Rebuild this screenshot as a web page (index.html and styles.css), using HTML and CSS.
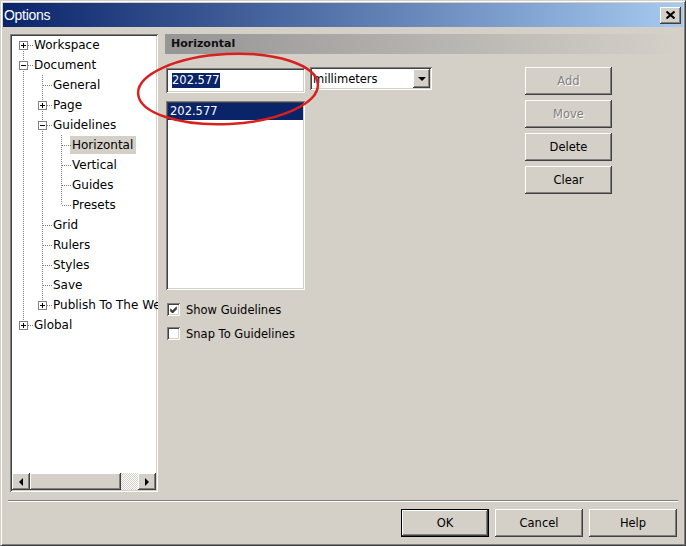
FILE: index.html
```html
<!DOCTYPE html>
<html lang="en">
<head>
    <meta charset="UTF-8">
    <title>Options</title>
    <link rel="stylesheet" href="styles.css">
</head>
<body>
    <div class="window">
        <div class="titlebar">
            <span class="title">Options</span>
            <span class="close-btn">
                <svg width="9" height="8" viewBox="0 0 9 8"><path d="M0.5 0.5L8.5 7.5M8.5 0.5L0.5 7.5" stroke="#000" stroke-width="2"/></svg>
            </span>
        </div>

        <div class="body">
            <!-- Tree -->
            <div class="tree">
                <div class="rows">
                    <div class="row"><span class="g f"><i class="box plus"></i></span><span class="label">Workspace</span></div>
                    <div class="row"><span class="g t"><i class="box minus"></i></span><span class="label">Document</span></div>
                    <div class="row"><span class="g v"></span><span class="g t"></span><span class="label">General</span></div>
                    <div class="row"><span class="g v"></span><span class="g t"><i class="box plus"></i></span><span class="label">Page</span></div>
                    <div class="row"><span class="g v"></span><span class="g t"><i class="box minus"></i></span><span class="label">Guidelines</span></div>
                    <div class="row"><span class="g v"></span><span class="g v"></span><span class="g t"></span><span class="label current">Horizontal</span></div>
                    <div class="row"><span class="g v"></span><span class="g v"></span><span class="g t"></span><span class="label">Vertical</span></div>
                    <div class="row"><span class="g v"></span><span class="g v"></span><span class="g t"></span><span class="label">Guides</span></div>
                    <div class="row"><span class="g v"></span><span class="g v"></span><span class="g l"></span><span class="label">Presets</span></div>
                    <div class="row"><span class="g v"></span><span class="g t"></span><span class="label">Grid</span></div>
                    <div class="row"><span class="g v"></span><span class="g t"></span><span class="label">Rulers</span></div>
                    <div class="row"><span class="g v"></span><span class="g t"></span><span class="label">Styles</span></div>
                    <div class="row"><span class="g v"></span><span class="g t"></span><span class="label">Save</span></div>
                    <div class="row"><span class="g v"></span><span class="g l"><i class="box plus"></i></span><span class="label">Publish To The Web</span></div>
                    <div class="row"><span class="g l"><i class="box plus"></i></span><span class="label">Global</span></div>
                </div>

                <div class="hscroll">
                    <span class="sb-btn"><span class="arrow-left"></span></span>
                    <span class="sb-thumb"></span>
                    <span class="sb-track"></span>
                    <span class="sb-btn"><span class="arrow-right"></span></span>
                </div>
            </div>

            <!-- Page -->
            <div class="panel">
                <div class="panel-head">Horizontal</div>
                <div class="panel-main">
                    <div class="col-left">
                        <div class="field num-input"><span class="sel-text">202.577</span></div>
                        <div class="field guide-list">
                            <div class="list-item selected">202.577</div>
                        </div>
                        <div class="checks">
                            <div class="check-row">
                                <span class="checkbox">
                                    <svg width="7" height="7" viewBox="0 0 7 7"><path d="M0 2.5L2.5 5L7 0.5M0 3.5L2.5 6L7 1.5M0 4.5L2.5 7L7 2.5" stroke="#000" stroke-width="1" fill="none"/></svg>
                                </span>
                                <span>Show Guidelines</span>
                            </div>
                            <div class="check-row">
                                <span class="checkbox"></span>
                                <span>Snap To Guidelines</span>
                            </div>
                        </div>
                    </div>

                    <div class="field unit-select">
                        <span class="unit-text">millimeters</span>
                        <span class="drop-btn"><span class="arrow-down"></span></span>
                    </div>

                    <div class="actions">
                        <div class="btn disabled">Add</div>
                        <div class="btn disabled">Move</div>
                        <div class="btn">Delete</div>
                        <div class="btn">Clear</div>
                    </div>
                </div>
            </div>
        </div>

        <div class="separator"></div>

        <div class="footer">
            <div class="btn default">OK</div>
            <div class="btn">Cancel</div>
            <div class="btn">Help</div>
        </div>

        <!-- red annotation drawn over the dialog -->
        <svg class="annotation" width="686" height="546" viewBox="0 0 686 546">
            <ellipse cx="227" cy="88" rx="90" ry="35" transform="rotate(-3 227 88)" fill="none" stroke="#d8201e" stroke-width="2.5"/>
        </svg>
    </div>
</body>
</html>
```

FILE: styles.css
```css
body {
    margin: 0;
    padding: 0;
    background: #d4d0c8;
    font-family: "DejaVu Sans", Verdana, sans-serif;
    font-size: 12px;
    color: #000;
}

.window {
    position: relative;
    width: 686px;
    height: 546px;
    box-sizing: border-box;
    display: flex;
    flex-direction: column;
    padding: 2px;
    background: #d4d0c8;
    border: 1px solid;
    border-color: #d4d0c8 #404040 #404040 #d4d0c8;
    box-shadow: inset 1px 1px #fff, inset -1px -1px #808080;
    overflow: hidden;
}

/* title bar */
.titlebar {
    height: 24px;
    flex: none;
    display: flex;
    align-items: center;
    justify-content: space-between;
    padding: 0 2px 0 1px;
    background: linear-gradient(to right, #0a246a, #a6caf0);
}

.title {
    color: #fff;
    font-family: "Liberation Sans", Arial, sans-serif;
    font-size: 14px;
    letter-spacing: -0.3px;
}

.close-btn {
    width: 21px;
    height: 17px;
    display: flex;
    align-items: center;
    justify-content: center;
    background: #d4d0c8;
    box-shadow: inset -1px -1px #404040, inset 1px 1px #fff, inset -2px -2px #808080;
}

/* main area */
.body {
    display: flex;
    padding: 7px 5px 0 7px;
    flex: none;
}

.tree {
    width: 148px;
    height: 458px;
    box-sizing: border-box;
    padding: 2px;
    background: #fff;
    box-shadow: inset 1px 1px #808080, inset -1px -1px #fff, inset 2px 2px #404040, inset -2px -2px #d4d0c8;
    display: flex;
    flex-direction: column;
    overflow: hidden;
}

.rows {
    flex: 1;
    margin-top: -1px;
    padding-left: 2px;
}

.row {
    display: flex;
    height: 20px;
    white-space: nowrap;
}

.g {
    position: relative;
    width: 19px;
    height: 20px;
    flex: none;
}

.g::before {
    content: "";
    position: absolute;
    left: 9px;
    top: 0;
    bottom: 0;
    width: 1px;
    background: repeating-linear-gradient(to bottom, #808080 0 1px, transparent 1px 2px);
}

.g.l::before { bottom: 10px; }
.g.f::before { top: 10px; }

.g.t::after,
.g.l::after,
.g.f::after {
    content: "";
    position: absolute;
    left: 10px;
    top: 10px;
    width: 9px;
    height: 1px;
    background: repeating-linear-gradient(to right, #808080 0 1px, transparent 1px 2px);
}

.box {
    position: absolute;
    left: 5px;
    top: 6px;
    width: 9px;
    height: 9px;
    box-sizing: border-box;
    border: 1px solid #808080;
    background: #fff;
    z-index: 1;
}

.box::before {
    content: "";
    position: absolute;
    left: 1px;
    top: 3px;
    width: 5px;
    height: 1px;
    background: #000;
}

.box.plus::after {
    content: "";
    position: absolute;
    left: 3px;
    top: 1px;
    width: 1px;
    height: 5px;
    background: #000;
}

.label {
    margin: 1px 0 1px 0;
    padding: 0 2px 0 1px;
    line-height: 18px;
}

.label.current {
    background: #d4d0c8;
    margin-left: -1px;
    padding-left: 2px;
    padding-right: 3px;
}

/* tree scrollbar */
.hscroll {
    display: flex;
    height: 17px;
    flex: none;
}

.sb-btn,
.sb-thumb,
.drop-btn,
.btn {
    background: #d4d0c8;
    box-shadow: inset -1px -1px #404040, inset 1px 1px #fff, inset -2px -2px #808080, inset 2px 2px #d4d0c8;
}

.sb-btn {
    width: 18px;
    display: flex;
    align-items: center;
    justify-content: center;
}

.sb-thumb {
    width: 91px;
}

.sb-track {
    flex: 1;
    background: repeating-conic-gradient(#fff 0 25%, #d4d0c8 0 50%) 0 0 / 2px 2px;
}

.arrow-left {
    border-style: solid;
    border-width: 4px 4px 4px 0;
    border-color: transparent #000 transparent transparent;
}

.arrow-right {
    border-style: solid;
    border-width: 4px 0 4px 4px;
    border-color: transparent transparent transparent #000;
}

/* right panel */
.panel {
    width: 513px;
    margin-left: 7px;
    font-size: 11.5px;
}

.panel-head {
    height: 20px;
    line-height: 20px;
    padding-left: 6px;
    font-weight: bold;
    font-size: 11px;
    color: #111;
    background: linear-gradient(to right, #959595, #d4d0c8);
}

.panel-main {
    display: flex;
    align-items: flex-start;
    padding: 13px 0 0 1px;
}

.col-left {
    width: 139px;
    white-space: nowrap;
}

.field {
    box-sizing: border-box;
    background: #fff;
    box-shadow: inset 1px 1px #808080, inset -1px -1px #fff, inset 2px 2px #404040, inset -2px -2px #d4d0c8;
}

.num-input {
    height: 25px;
    margin-top: 1px;
    padding: 0 0 0 6px;
    display: flex;
    align-items: center;
}

.sel-text {
    background: #0a246a;
    color: #fff;
    line-height: 15px;
}

.guide-list {
    height: 189px;
    margin-top: 8px;
    padding: 2px;
}

.list-item {
    height: 17px;
    line-height: 17px;
    padding-left: 2px;
}

.list-item.selected {
    background: #0a246a;
    color: #fff;
}

.checks {
    margin-top: 13px;
    display: flex;
    flex-direction: column;
    gap: 11px;
}

.check-row {
    display: flex;
    align-items: center;
    gap: 6px;
    height: 13px;
    padding-left: 1px;
}

.checkbox {
    width: 13px;
    height: 13px;
    flex: none;
    box-sizing: border-box;
    display: flex;
    align-items: center;
    justify-content: center;
    background: #fff;
    box-shadow: inset 1px 1px #808080, inset -1px -1px #fff, inset 2px 2px #404040, inset -2px -2px #d4d0c8;
}

.unit-select {
    width: 122px;
    height: 23px;
    margin-left: 5px;
    padding: 2px;
    display: flex;
    align-items: center;
    justify-content: space-between;
}

.unit-text {
    padding-left: 1px;
}

.drop-btn {
    width: 17px;
    height: 19px;
    display: flex;
    align-items: center;
    justify-content: center;
}

.arrow-down {
    border-style: solid;
    border-width: 4px 4px 0 4px;
    border-color: #000 transparent transparent transparent;
}

.actions {
    margin-left: 93px;
    display: flex;
    flex-direction: column;
    gap: 5px;
}

.btn {
    width: 87px;
    height: 28px;
    box-sizing: border-box;
    display: flex;
    align-items: center;
    justify-content: center;
    font-size: 11.5px;
}

.btn.disabled {
    color: #808080;
    text-shadow: 1px 1px #fff;
}

/* bottom */
.separator {
    height: 0;
    margin: 8px 5px 0 5px;
    border-top: 1px solid #808080;
    border-bottom: 1px solid #fff;
}

.footer {
    display: flex;
    justify-content: flex-end;
    gap: 6px;
    margin-top: 7px;
    padding-right: 6px;
}

.footer .btn {
    width: 88px;
    height: 28px;
}

.btn.default {
    box-shadow: inset 0 0 0 1px #000, inset -2px -2px #404040, inset 2px 2px #fff, inset -3px -3px #808080;
}

.annotation {
    position: absolute;
    left: 0;
    top: 0;
    pointer-events: none;
}
```
